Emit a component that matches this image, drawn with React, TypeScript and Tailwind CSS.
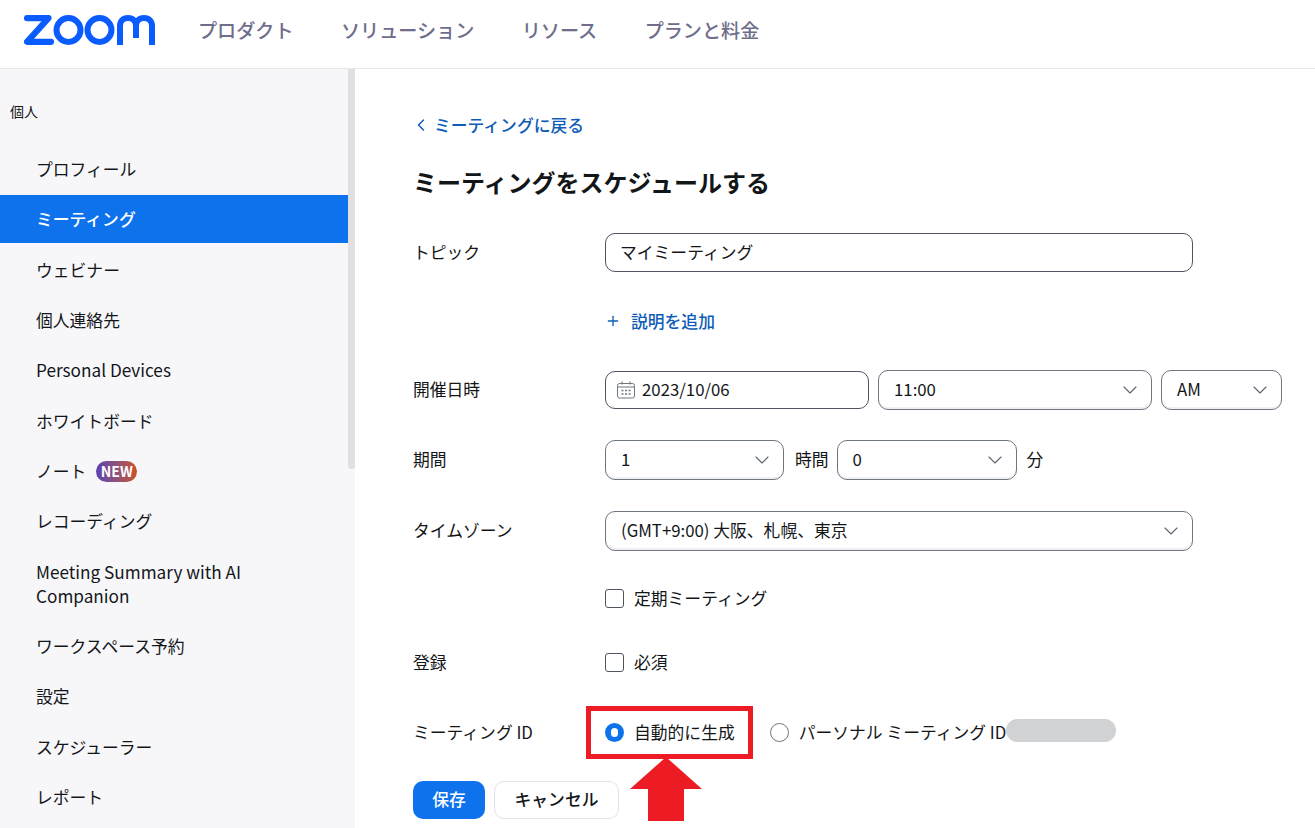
import React from 'react';
import { ChevronDown, ChevronLeft, Plus } from 'lucide-react';

const NAV_ITEMS = [
  'プロフィール',
  'ミーティング',
  'ウェビナー',
  '個人連絡先',
  'Personal Devices',
  'ホワイトボード',
  'ノート',
  'レコーディング',
  'Meeting Summary with AI Companion',
  'ワークスペース予約',
  '設定',
  'スケジューラー',
  'レポート',
];

function ZoomLogo() {
  return (
    <svg width="131" height="30" viewBox="0 0 131 30" fill="none" className="block">
      <path d="M3 3.2H24.5L3 26.8H27" stroke="#0b5cff" strokeWidth="6.2" strokeLinejoin="round" strokeLinecap="round" />
      <circle cx="44.5" cy="15" r="12" stroke="#0b5cff" strokeWidth="6" />
      <circle cx="75.5" cy="15" r="12" stroke="#0b5cff" strokeWidth="6" />
      <path d="M96 30V11C96 6 99 3 104 3C109 3 112 6 112 11V23M112 11C112 6 115 3 120 3C125 3 128 6 128 11V30" stroke="#0b5cff" strokeWidth="6" />
    </svg>
  );
}

function Select({ value, className }: { value: string; className: string }) {
  return (
    <div className={`flex h-[40px] items-center justify-between rounded-[10px] border border-[#6e7680] pl-[15px] pr-[9px] shadow-[inset_0_-2px_0_#f1f1f3] ${className}`}>
      <span>{value}</span>
      <ChevronDown size={24} strokeWidth={1.1} className="text-[#5c6370]" />
    </div>
  );
}

function Row({ label, className, children }: { label: string; className: string; children: React.ReactNode }) {
  return (
    <div className={`flex items-center ${className}`}>
      <div className="w-[192px] shrink-0">{label}</div>
      {children}
    </div>
  );
}

export default function App() {
  return (
    <div className="h-[828px] overflow-hidden bg-white text-[16.8px] text-[#131619] font-['Noto_Sans_CJK_JP','Noto_Sans',sans-serif]">
      <header className="flex h-[69px] items-center border-b border-[#e8e8ec] pb-[8px] pl-[24px]">
        <ZoomLogo />
        <nav className="ml-[43px] flex gap-[47.5px] text-[19.1px] font-medium text-[#6e6e8c]">
          <span>プロダクト</span>
          <span>ソリューション</span>
          <span>リソース</span>
          <span>プランと料金</span>
        </nav>
      </header>

      <div className="flex h-[759px]">
        <aside className="relative w-[355px] shrink-0 bg-[#f7f7fa]">
          <div className="absolute right-0 top-0 h-[400px] w-[7px] rounded-b-[3px] bg-[#e0e0e0]" />
          <div className="pl-[10px] pt-[33px] text-[14px] leading-[18px]">個人</div>
          <ul className="mt-[25px] w-[348px]">
            {NAV_ITEMS.map((item) => (
              <li
                key={item}
                className={`mb-[2.35px] flex items-center py-[12px] pl-[36px] pr-[100px] leading-[24px] ${
                  item === 'ミーティング' ? 'bg-[#0e72ed] font-medium text-white' : ''
                } ${item.startsWith('Me') || item.startsWith('Pe') ? 'text-[17.2px]' : 'text-[16.8px]'}`}
              >
                <span>{item}</span>
                {item === 'ノート' && (
                  <span className="ml-[10px] rounded-full bg-linear-to-r from-[#5b3fb0] to-[#c8501e] px-[4.5px] text-[14px] font-bold leading-[21px] text-white">
                    NEW
                  </span>
                )}
              </li>
            ))}
          </ul>
        </aside>

        <main className="min-w-0 flex-1 pl-[58px]">
          <div className="flex items-center pt-[44px] font-medium leading-[24px] text-[#0e5cb8]">
            <ChevronLeft size={20} strokeWidth={1.8} className="ml-[-2px] mr-[3px]" />
            ミーティングに戻る
          </div>
          <h1 className="mt-[27px] text-[24px] font-bold leading-[36px]">ミーティングをスケジュールする</h1>

          <Row label="トピック" className="mt-[33px]">
            <div className="flex h-[39px] w-[588px] items-center rounded-[10px] border border-[#4e5560] pl-[14px]">マイミーティング</div>
          </Row>

          <div className="mt-[37px] flex items-center pl-[192px] font-medium leading-[24px] text-[#0e5cb8]">
            <Plus size={16} strokeWidth={2} className="mr-[10px]" />
            説明を追加
          </div>

          <Row label="開催日時" className="mt-[37px]">
            <div className="flex items-center gap-[9px]">
              <div className="flex h-[38px] w-[264px] items-center rounded-[10px] border border-[#4e5560] pl-[11px]">
                <svg width="18" height="18" viewBox="0 0 18 18" fill="none" stroke="#6e7680" strokeWidth="1" className="mr-[7px]">
                  <rect x="0.5" y="2.5" width="17" height="14.5" rx="2" />
                  <path d="M0.5 6H17.5M5 0.5V3.5M13 0.5V3.5" />
                  <path d="M4.5 9.5H6.5M8 9.5H10M11.5 9.5H13.5M4.5 13H6.5M8 13H10M11.5 13H13.5" strokeWidth="1.4" />
                </svg>
                2023/10/06
              </div>
              <Select value="11:00" className="w-[274px]" />
              <Select value="AM" className="w-[121px]" />
            </div>
          </Row>

          <Row label="期間" className="mt-[30px]">
            <Select value="1" className="w-[179px]" />
            <span className="ml-[11px]">時間</span>
            <Select value="0" className="ml-[8px] w-[180px]" />
            <span className="ml-[10px]">分</span>
          </Row>

          <Row label="タイムゾーン" className="mt-[31px]">
            <Select value="(GMT+9:00) 大阪、札幌、東京" className="w-[588px]" />
          </Row>

          <div className="mt-[35px] flex items-center pl-[192px] leading-[24px]">
            <span className="mr-[10px] size-[19px] rounded-[3px] border border-[#4e5560]" />
            定期ミーティング
          </div>

          <Row label="登録" className="mt-[40px] leading-[24px]">
            <span className="mr-[10px] size-[19px] rounded-[3px] border border-[#4e5560]" />
            必須
          </Row>

          <Row label="ミーティング ID" className="relative mt-[46px] leading-[24px]">
            <span className="mr-[10px] flex size-[19px] items-center justify-center rounded-full bg-[#0e72ed]">
              <span className="h-[9px] w-[7px] rounded-full bg-white" />
            </span>
            <span className="mr-[35px]">自動的に生成</span>
            <span className="mr-[10px] size-[19px] rounded-full border border-[#6e7680]" />
            パーソナル ミーティング ID
            <span className="h-[23px] w-[110px] -translate-y-[2px] rounded-full bg-[#d1d2d4]" />
            <div className="absolute left-[173px] top-[-14px] h-[53px] w-[167px] border-[5px] border-[#ed1c24]" />
          </Row>

          <div className="relative mt-[37px] flex gap-[9px]">
            <button className="h-[38px] w-[72px] rounded-[10px] bg-[#0e72ed] font-medium text-white">保存</button>
            <button className="h-[38px] w-[125px] rounded-[10px] border border-[#dfe3e8] font-medium">キャンセル</button>
            <svg width="72" height="64" viewBox="0 0 72 64" className="absolute left-[217px] top-[-24px]">
              <path d="M36 0L72 32H54V64H18V32H0Z" fill="#ed1c24" />
            </svg>
          </div>
        </main>
      </div>
    </div>
  );
}
